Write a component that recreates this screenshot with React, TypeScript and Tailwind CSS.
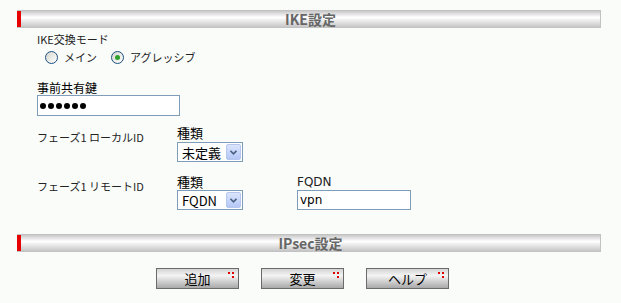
import React from 'react';

const jp = "font-['Noto_Sans_CJK_JP',sans-serif]";
const latin = "font-['DejaVu_Sans','Noto_Sans_CJK_JP',sans-serif]";

// section title bar with the red mark on the left
const SectionBar = ({ title }: { title: string }) => (
  <div className="flex h-[18px] border border-l-0 border-[#c2c2c2] bg-linear-to-b from-[#c9c9c9] via-white via-40% to-[#c6c6c6]">
    <div className="w-[4px] bg-[#e60000]" />
    <div className={`flex-1 flex items-center justify-center text-[14px] leading-none font-bold text-[#666] ${jp}`}>{title}</div>
  </div>
);

const Radio = ({ checked, label, width }: { checked?: boolean; label: string; width: string }) => (
  <div className={`flex items-center whitespace-nowrap ${width}`}>
    <div className="flex h-[13px] w-[13px] shrink-0 items-center justify-center rounded-full border border-[#1c5180] bg-linear-to-br from-[#d6d6ce] to-white">
      {checked && <div className="h-[5px] w-[5px] rounded-full bg-[#2ea02e]" />}
    </div>
    <span className={`ml-[6px] text-[11px] leading-[13px] text-[#222] ${jp}`}>{label}</span>
  </div>
);

const Select = ({ value }: { value: string }) => (
  <div className="flex h-[20px] w-[66px] items-center border border-[#7f9db9] bg-white">
    <span className={`flex-1 pl-[4px] text-[13px] leading-none text-black ${jp}`}>{value}</span>
    <div className="mr-[1px] flex h-[16px] w-[15px] items-center justify-center rounded-[2px] border border-[#b6c6ee] bg-linear-to-b from-[#dbe5fc] to-[#b4c7f5]">
      <svg width="7" height="5" viewBox="0 0 7 5">
        <path d="M0.5 0.8 L3.5 3.8 L6.5 0.8" fill="none" stroke="#4d6185" strokeWidth="1.6" />
      </svg>
    </div>
  </div>
);

const Button = ({ label }: { label: string }) => (
  <div className="relative flex h-[21px] w-[83px] items-center justify-center border border-[#6b6b6b] bg-linear-to-b from-[#d4d4d4] via-[#f4f4f4] via-35% to-[#a9a9a9]">
    <span className={`text-[13px] leading-none text-black ${jp}`}>{label}</span>
    <div className="absolute right-[8px] top-[3px] h-[2px] w-[2px] bg-[#e00000]" />
    <div className="absolute right-[4px] top-[3px] h-[2px] w-[2px] bg-[#e00000]" />
    <div className="absolute right-[4px] top-[7px] h-[2px] w-[2px] bg-[#e00000]" />
  </div>
);

const App: React.FC = () => {
  return (
    <div className="h-[303px] w-[621px] bg-[#fafcfa] pl-[17px] pr-[20px] pt-[10px]">
      <SectionBar title="IKE設定" />
      <div className="pl-[20px]">
        <div className={`mt-[4px] text-[11px] leading-[14px] text-[#222] ${jp}`}>IKE交換モード</div>
        <div className="ml-[8px] mt-[5px] flex">
          <Radio label="メイン" width="w-[66px]" />
          <Radio checked label="アグレッシブ" width="w-[100px]" />
        </div>
        <div className={`mt-[17px] text-[12px] leading-[14px] text-black ${jp}`}>事前共有鍵</div>
        <div className="flex h-[21px] w-[143px] items-center gap-[2px] border border-[#7f9db9] bg-white pl-[2px]">
          {[0, 1, 2, 3, 4, 5].map((i) => (
            <div key={i} className="h-[6px] w-[6px] rounded-full bg-black" />
          ))}
        </div>

        <div className="mt-[10px] flex">
          <div className={`w-[140px] pt-[4px] text-[11px] leading-[14px] text-[#222] ${jp}`}>フェーズ1 ローカルID</div>
          <div>
            <div className={`text-[13px] leading-[14px] text-black ${jp}`}>種類</div>
            <div className="mt-[2px]"><Select value="未定義" /></div>
          </div>
        </div>

        <div className="mt-[13px] flex">
          <div className={`w-[140px] pt-[4px] text-[11px] leading-[14px] text-[#222] ${jp}`}>フェーズ1 リモートID</div>
          <div className="w-[120px]">
            <div className={`text-[13px] leading-[14px] text-black ${jp}`}>種類</div>
            <div className="mt-[1px]"><Select value="FQDN" /></div>
          </div>
          <div>
            <div className={`text-[12px] leading-[14px] text-[#222] ${latin}`}>FQDN</div>
            <div className={`mt-[1px] flex h-[20px] w-[114px] items-center border border-[#7f9db9] bg-white pl-[2px] text-[12px] leading-none text-black ${latin}`}>vpn</div>
          </div>
        </div>
      </div>

      <div className="mt-[24px]">
        <SectionBar title="IPsec設定" />
      </div>

      <div className="mt-[16px] flex gap-[22px] pl-[139px]">
        <Button label="追加" />
        <Button label="変更" />
        <Button label="ヘルプ" />
      </div>
    </div>
  );
};

export default App;
